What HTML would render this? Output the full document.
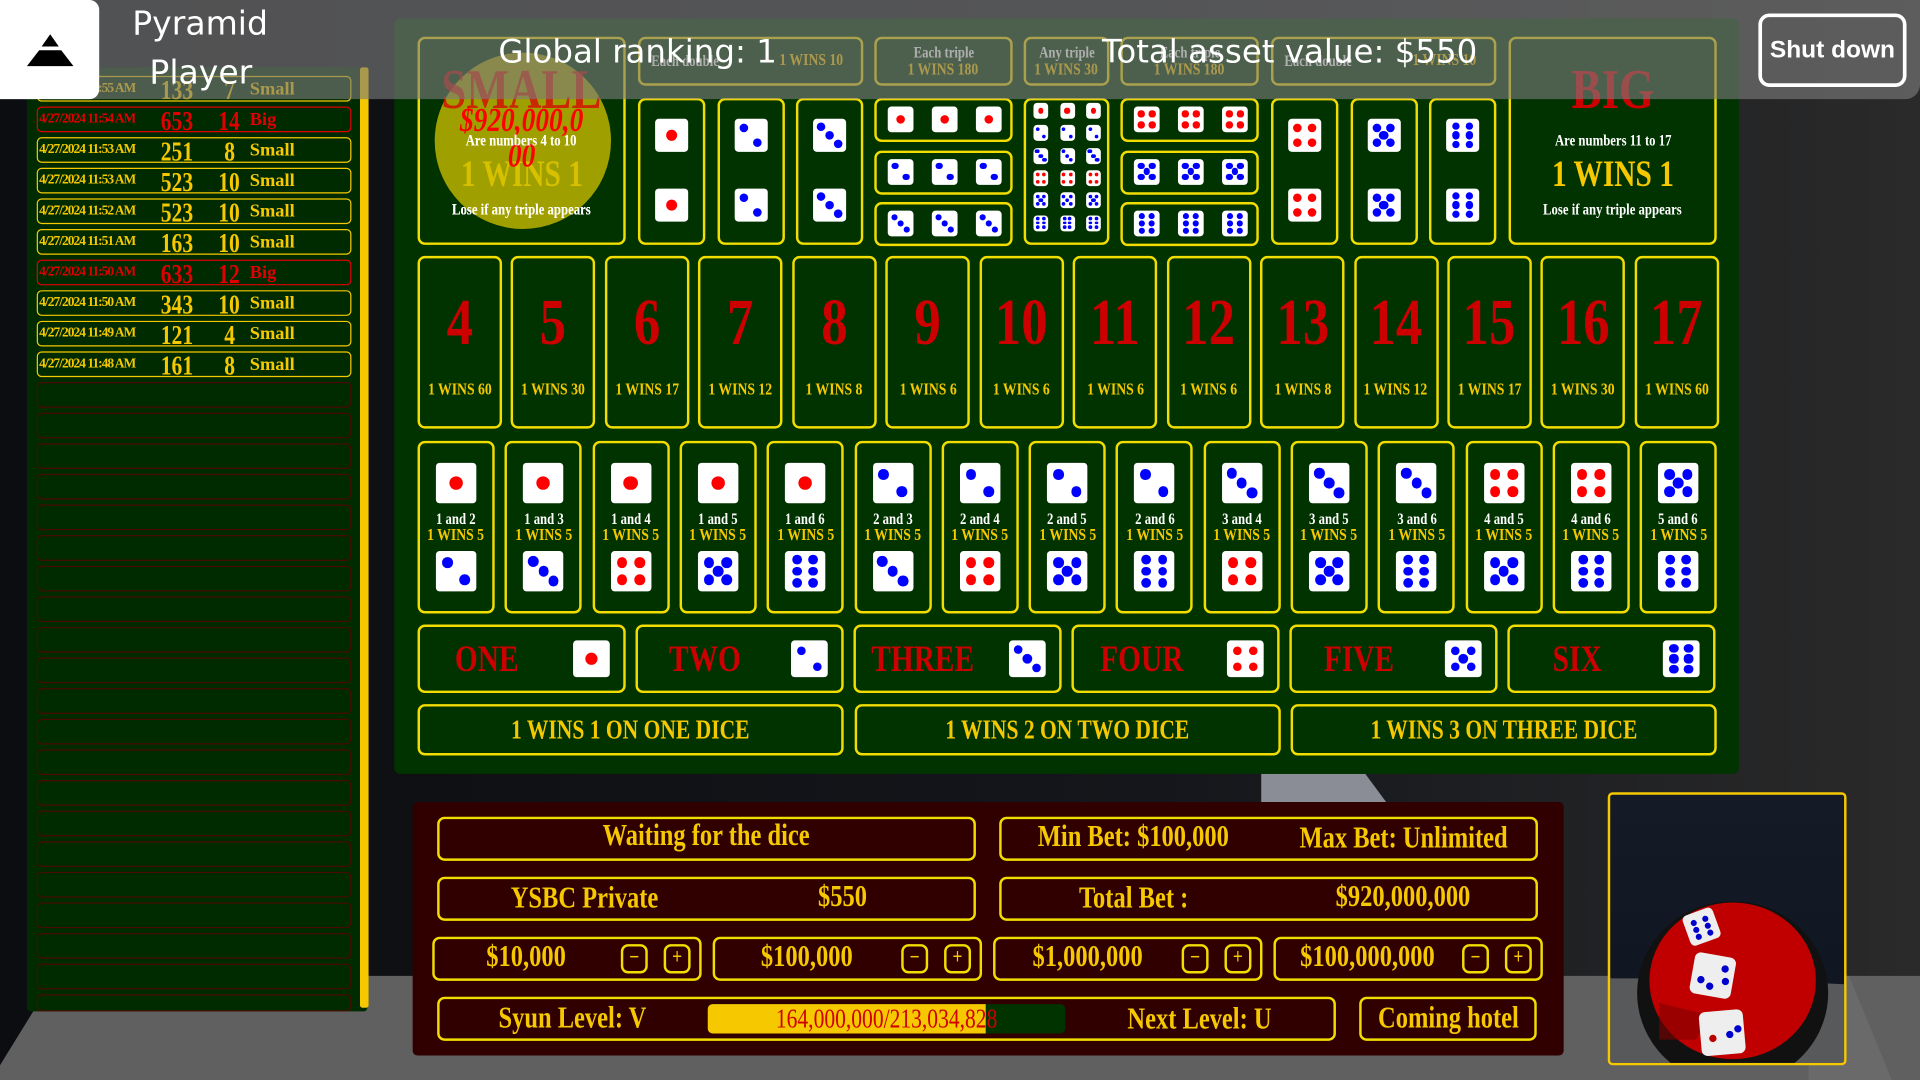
<!DOCTYPE html>
<html><head><meta charset="utf-8">
<style>
html,body{margin:0;padding:0;width:1920px;height:1080px;overflow:hidden;background:#0c0d10;}
#s{position:absolute;left:0;top:0;width:1568px;height:882px;transform:scale(1.22449);transform-origin:0 0;font-family:"Liberation Serif",serif;background:linear-gradient(90deg,#0c0d10 0%,#14161b 60%,#2a2a2a 100%);overflow:hidden}
.a{position:absolute;box-sizing:border-box}
.b{border:2px solid #f2dd00;border-radius:6px}
.t{position:absolute;white-space:nowrap;text-align:center;line-height:1;font-weight:bold}
.die{position:absolute;background:#fff;border-radius:3px;box-sizing:border-box}
.pip{position:absolute;border-radius:50%}
.cond{display:inline-block;transform:scaleX(.8)}
.sans{font-weight:normal!important}
</style></head><body><div id="s">
<svg class="a" style="left:0;top:0" width="1568" height="882">
<polygon points="45,797 1568,797 1568,882 0,882 0,870" fill="#606060"/>
<polygon points="1030,632 1115,632 1132,655 1030,655" fill="#8a8d95"/>
<polygon points="1477,797 1510,797 1545,882 1477,882" fill="#6a6a6a"/>
</svg>
<div class="a" style="left:22px;top:55px;width:278px;height:771px;background:#002b00;border-radius:3px"></div>
<div class="a" style="left:294px;top:55px;width:7px;height:768px;background:#f5c800;border-radius:2px"></div>
<div id="hist"></div>
<div class="a" style="left:322px;top:15px;width:1098px;height:617px;background:#003300;border-radius:5px"></div>
<div id="board"></div>
<div class="a" style="left:337px;top:655px;width:940px;height:207px;background:#300000;border-radius:4px"></div>
<div id="panel"></div>
<div class="a" style="left:1313px;top:647px;width:195px;height:223px;border:2px solid #f5c800;border-radius:4px;background:linear-gradient(#141a26,#0f1520);overflow:hidden">
<svg width="195" height="223" style="position:absolute;left:0;top:0">
<polygon points="0,150 90,150 195,155 195,223 0,223" fill="#606060" opacity=".9"/>
<ellipse cx="100" cy="162" rx="78" ry="75" fill="#111"/>
<ellipse cx="100" cy="152" rx="68" ry="64" fill="#c00000"/>
<path d="M40 170 L80 180 L70 200 L40 200Z" fill="#800000" opacity=".6"/>
<g transform="translate(58,100) rotate(-20)"><rect width="26" height="26" rx="4" fill="#eee"/><circle cx="8" cy="8" r="2.5" fill="#00c"/><circle cx="18" cy="8" r="2.5" fill="#00c"/><circle cx="8" cy="14" r="2.5" fill="#00c"/><circle cx="18" cy="14" r="2.5" fill="#00c"/><circle cx="8" cy="20" r="2.5" fill="#00c"/><circle cx="18" cy="20" r="2.5" fill="#00c"/></g>
<g transform="translate(70,128) rotate(10)"><rect width="34" height="34" rx="5" fill="#eee"/><circle cx="8" cy="22" r="3" fill="#00c"/><circle cx="16" cy="26" r="3" fill="#00c"/><circle cx="26" cy="10" r="3" fill="#00c"/><circle cx="28" cy="20" r="3" fill="#00c"/></g>
<g transform="translate(72,178) rotate(-5)"><rect width="36" height="36" rx="5" fill="#eee"/><circle cx="10" cy="22" r="3" fill="#b00"/><circle cx="24" cy="20" r="3" fill="#00c"/><circle cx="31" cy="16" r="3" fill="#00c"/></g>
</svg></div>
<div class="a" style="left:0;top:0;width:1568px;height:81px;background:rgba(125,125,125,.62);border-radius:0 0 12px 0"></div>
<div class="a" style="left:0;top:0;width:81px;height:81px;background:#fff;border-radius:0 8px 8px 0"></div>
<svg class="a" style="left:20px;top:26px" width="42" height="32"><polygon points="21,2 28,12 14,12" fill="#000"/><polygon points="12,15 30,15 40,28 2,28" fill="#000"/></svg>
<div class="t sans" style="left:108px;top:4px;color:#fff;font:27px 'DejaVu Sans',sans-serif">Pyramid</div>
<div class="t sans" style="left:122px;top:44px;color:#fff;font:27px 'DejaVu Sans',sans-serif">Player</div>
<div class="t sans" style="left:407px;top:27px;color:#fff;font:26.5px 'DejaVu Sans',sans-serif">Global ranking: 1</div>
<div class="t sans" style="left:900px;top:27px;color:#fff;font:26.5px 'DejaVu Sans',sans-serif">Total asset value: $550</div>
<div class="a" style="left:1436px;top:11px;width:121px;height:60px;border:3px solid #fff;border-radius:9px"></div>
<div class="t" style="left:1436px;top:30px;width:121px;color:#fff;font:bold 20px 'Liberation Sans',sans-serif">Shut down</div>
</div>
<script>
const P={1:[[.5,.5]],2:[[.28,.28],[.72,.72]],3:[[.25,.25],[.5,.5],[.75,.75]],4:[[.28,.28],[.72,.28],[.28,.72],[.72,.72]],5:[[.28,.28],[.72,.28],[.5,.5],[.28,.72],[.72,.72]],6:[[.3,.22],[.7,.22],[.3,.5],[.7,.5],[.3,.78],[.7,.78]]};
function die(n,x,y,w,h){h=h||w;let c=(n==1||n==4)?'#f00':'#00f';let r=n==1?w*.17:(n==6?w*.12:w*.13);let s=`<div class="die" style="left:${x}px;top:${y}px;width:${w}px;height:${h}px">`;for(const p of P[n])s+=`<div class="pip" style="background:${c};width:${2*r}px;height:${2*r}px;left:${p[0]*w-r}px;top:${p[1]*h-r}px"></div>`;return s+'</div>';}
function box(x,y,w,h,extra){return `<div class="a b" style="left:${x}px;top:${y}px;width:${w}px;height:${h}px;${extra||''}"></div>`;}
function txt(x,y,w,s,css){return `<div class="t" style="left:${x}px;top:${y}px;width:${w}px;${css}"><span class="cond">${s}</span></div>`;}
let B='';
B+=box(341,30,170,170);
B+=txt(341,108,170,'Are numbers 4 to 10','color:#fff;font-size:13px');
B+=txt(341,128,170,'1 WINS 1','color:#f5c800;font-size:30px');
B+=txt(341,164,170,'Lose if any triple appears','color:#fff;font-size:13px');
B+=`<div class="a" style="left:355px;top:43px;width:144px;height:144px;border-radius:50%;background:rgba(205,190,0,.78)"></div>`;
B+=txt(341,50,170,'SMALL','color:rgba(215,0,0,.75);font-size:46px');
B+=txt(341,85,170,'<i>$920,000,0</i>','color:#f00;font-size:28px');
B+=txt(341,114,170,'<i>00</i>','color:#f00;font-size:28px');
B+=txt(341,108,170,'Are numbers 4 to 10','color:#fff;font-size:13px');
B+=txt(341,164,170,'Lose if any triple appears','color:#fff;font-size:13px');
B+=box(1232,30,170,170);
B+=txt(1232,50,170,'BIG','color:#cc0000;font-size:46px');
B+=txt(1232,108,170,'Are numbers 11 to 17','color:#fff;font-size:13px');
B+=txt(1232,128,170,'1 WINS 1','color:#f5c800;font-size:30px');
B+=txt(1232,164,170,'Lose if any triple appears','color:#fff;font-size:13px');
[[521,[1,2,3]],[1038,[4,5,6]]].forEach(([x,ds])=>{B+=box(x,30,184,40);B+=txt(x+4,43,100,'Each double','color:#fff;font-size:13px;text-align:left');B+=txt(x+100,43,84,'1 WINS 10','color:#f5c800;font-size:14px');
ds.forEach((d,i)=>{let cx=x+i*64.5;B+=box(cx,80,55,120);B+=die(d,cx+14,97,27);B+=die(d,cx+14,154,27);});});
[[714,[1,2,3]],[915,[4,5,6]]].forEach(([x,ds])=>{B+=box(x,30,113,40);B+=txt(x,36,113,'Each triple','color:#fff;font-size:13px');B+=txt(x,51,113,'1 WINS 180','color:#f5c800;font-size:14px');
ds.forEach((d,i)=>{let y=80+i*42.5;B+=box(x,y,113,36);for(let k=0;k<3;k++)B+=die(d,x+11+k*36,y+7,21);});});
B+=box(836,30,70,40);B+=txt(836,36,70,'Any triple','color:#fff;font-size:13px');B+=txt(836,51,70,'1 WINS 30','color:#f5c800;font-size:14px');
B+=box(836,80,70,120);for(let d=1;d<=6;d++)for(let k=0;k<3;k++)B+=die(d,844+k*21.5,84+(d-1)*18.3,12,13);
const pay=[60,30,17,12,8,6,6,6,6,8,12,17,30,60];
for(let i=0;i<14;i++){let x=341+i*76.45;B+=box(x,209,69,141);B+=txt(x-5,236,79,String(i+4),'color:#cc0000;font-size:54px');B+=txt(x-5,312,79,'1 WINS '+pay[i],'color:#f5c800;font-size:14px');}
let pairs=[];for(let a=1;a<=6;a++)for(let b=a+1;b<=6;b++)pairs.push([a,b]);
pairs.forEach(([a,b],i)=>{let x=341+i*71.3;B+=box(x,360,63,141);B+=die(a,x+15,378,33);B+=txt(x-4,417,71,a+' and '+b,'color:#fff;font-size:13px');B+=txt(x-4,431,71,'1 WINS 5','color:#f5c800;font-size:14px');B+=die(b,x+15,450,33);});
['ONE','TWO','THREE','FOUR','FIVE','SIX'].forEach((n,i)=>{let x=341+i*178;B+=box(x,510,170,56);B+=txt(x,524,114,n,'color:#cc0000;font-size:30px');B+=die(i+1,x+127,523,30);});
['1 WINS 1 ON ONE DICE','1 WINS 2 ON TWO DICE','1 WINS 3 ON THREE DICE'].forEach((n,i)=>{let x=341+i*356.5;B+=box(x,575,348,42);B+=txt(x,585,348,n,'color:#f5c800;font-size:22px');});
document.getElementById('board').innerHTML=B;
let H='';const rows=[['4/27/2024 11:55 AM',133,7,'Small'],['4/27/2024 11:54 AM',653,14,'Big'],['4/27/2024 11:53 AM',251,8,'Small'],['4/27/2024 11:53 AM',523,10,'Small'],['4/27/2024 11:52 AM',523,10,'Small'],['4/27/2024 11:51 AM',163,10,'Small'],['4/27/2024 11:50 AM',633,12,'Big'],['4/27/2024 11:50 AM',343,10,'Small'],['4/27/2024 11:49 AM',121,4,'Small'],['4/27/2024 11:48 AM',161,8,'Small']];
for(let i=0;i<31;i++){let y=62+i*25;if(y>822)break;let h=Math.min(21,826-y);
if(i<rows.length){let r=rows[i],c=r[3]=='Big'?'#e00000':'#f5c800';
H+=`<div class="a" style="left:30px;top:${y}px;width:257px;height:21px;border:1.5px solid ${c};border-radius:4px"></div>`;
H+=`<div class="t" style="left:32px;top:${y+5}px;color:${c};font-size:11px;letter-spacing:-.8px">${r[0]}</div>`;
H+=`<div class="t" style="left:124px;top:${y+1}px;width:40px;color:${c};font-size:22px"><span class="cond">${r[1]}</span></div>`;
H+=`<div class="t" style="left:172px;top:${y+1}px;width:30px;color:${c};font-size:22px"><span class="cond">${r[2]}</span></div>`;
H+=`<div class="t" style="left:204px;top:${y+4}px;color:${c};font-size:15px;text-align:left">${r[3]}</div>`;}
else H+=`<div class="a" style="left:30px;top:${y}px;width:257px;height:${h}px;border:1px solid #4a0b00;border-radius:4px"></div>`;}
document.getElementById('hist').innerHTML=H;
let Q='';const f='color:#f5c800;font-size:25px';
Q+=box(357,667,440,36);Q+=txt(357,670,440,'Waiting for the dice',f);
Q+=box(816,667,440,36);Q+=txt(816,671,220,'Min Bet: $100,000',f);Q+=txt(1036,672,220,'Max Bet: Unlimited',f);
Q+=box(357,716,440,36);Q+=txt(357,721,240,'YSBC Private',f);Q+=txt(620,720,135,'$550',f);
Q+=box(816,716,440,36);Q+=txt(816,721,220,'Total Bet :',f);Q+=txt(1036,720,220,'$920,000,000',f);
['$10,000','$100,000','$1,000,000','$100,000,000'].forEach((v,i)=>{let x=353+i*229;Q+=box(x,765,220,36);Q+=txt(x+4,769,146,v,f);
Q+=box(x+154,771,22,24,'border-radius:6px');Q+=box(x+189,771,22,24,'border-radius:6px');Q+=txt(x+154,773,22,'−','color:#f5c800;font-size:17px;font-family:Liberation Sans;font-weight:normal');Q+=txt(x+189,773,22,'+','color:#f5c800;font-size:17px;font-family:Liberation Sans;font-weight:normal');});
Q+=box(357,814,734,36);Q+=txt(357,819,220,'Syun Level: V',f);
Q+=`<div class="a" style="left:578px;top:820px;width:292px;height:24px;background:#003300;border-radius:4px"><div style="width:227px;height:24px;background:#f5c800;border-radius:4px 0 0 4px"></div></div>`;
Q+=txt(578,821,292,'164,000,000/213,034,828','color:#d00000;font-size:22px;font-weight:normal');
Q+=txt(880,820,200,'Next Level: U',f);
Q+=box(1110,814,145,36);Q+=txt(1110,819,145,'Coming hotel',f);
document.getElementById('panel').innerHTML=Q;
</script>
</body></html>
